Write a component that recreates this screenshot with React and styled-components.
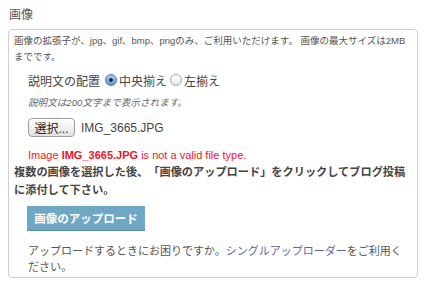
import React from 'react';
import styled, { createGlobalStyle } from 'styled-components';

const GlobalStyle = createGlobalStyle`
  html, body {
    margin: 0;
    padding: 0;
    background: #ffffff;
  }
  body {
    font-family: "Liberation Sans", "Noto Sans CJK JP", sans-serif;
    color: #444;
    text-spacing-trim: space-all;
  }
`;

const Page = styled.div`
  padding: 7px 12px 0 8px;
  width: 410px;
`;

const Title = styled.h3`
  margin: 0 0 6px 1px;
  font-size: 12px;
  line-height: 16px;
  font-weight: normal;
  color: #555;
`;

const Panel = styled.div`
  border: 1px solid #cfcfcf;
  border-radius: 4px;
  padding: 3px 4px 2px 5px;
  background: #fff;
`;

const Notice = styled.p`
  margin: 0;
  font-size: 9.5px;
  line-height: 16px;
  color: #555;
`;

const Indent = styled.div`
  padding-left: 14px;
  margin-top: ${(p) => p.$top || 0}px;
`;

const OptionRow = styled(Indent)`
  display: flex;
  align-items: center;
  height: 18px;
  font-size: 12px;
  color: #444;
`;

const OptionLabel = styled.span`
  margin-right: 5px;
`;

const Choice = styled.label`
  display: flex;
  align-items: center;
  margin-right: 3px;
`;

const Radio = styled.input.attrs({ type: 'radio' })`
  appearance: none;
  width: 12px;
  height: 12px;
  margin: 0 2px 0 0;
  border-radius: 50%;
  border: 1px solid #a5a5a5;
  background: linear-gradient(#ffffff, #e6e6e6);
  box-sizing: border-box;
  &:checked {
    border-color: #5477a3;
    background: radial-gradient(circle at 50% 50%, #1d2633 0, #1d2633 1.5px, transparent 2.1px),
      linear-gradient(#a8cdf2, #5d98da);
  }
`;

const Hint = styled(Indent)`
  font-size: 9.6px;
  line-height: 14px;
  font-style: italic;
  color: #666;
`;

const FileRow = styled(Indent)`
  display: flex;
  align-items: center;
  height: 19px;
  font-size: 12px;
  color: #444;
`;

const PickButton = styled.button`
  height: 19px;
  width: 47px;
  padding: 0;
  margin-right: 6px;
  border: 1px solid #9d9d9d;
  border-radius: 4px;
  background: linear-gradient(#ffffff, #e2e2e2);
  font-family: inherit;
  font-size: 12px;
  color: #222;
`;

const ErrorLine = styled(Indent)`
  font-size: 11px;
  line-height: 16px;
  color: #f0141e;
  b {
    font-weight: bold;
  }
`;

const Lead = styled.p`
  margin: 0;
  font-size: 11.2px;
  line-height: 18px;
  font-weight: bold;
  color: #444;
`;

const UploadButton = styled.button`
  display: block;
  margin: 7px 0 0 13px;
  width: 118px;
  height: 25px;
  border: none;
  border-bottom: 1px solid #5b8ea9;
  background: #6fa7c4;
  color: #fff;
  font-family: inherit;
  font-size: 11.5px;
  font-weight: bold;
  padding: 0;
`;

const Help = styled(Indent)`
  padding-right: 10px;
  font-size: 11px;
  line-height: 16px;
  color: #555;
`;

const HelpLink = styled.a`
  color: #5e62a6;
  text-decoration: none;
`;

export default function App() {
  return (
    <>
      <GlobalStyle />
      <Page>
        <Title>画像</Title>
        <Panel>
          <Notice>
            画像の拡張子が、jpg、gif、bmp、pngのみ、ご利用いただけます。 画像の最大サイズは2MB
            <br />
            までです。
          </Notice>
          <OptionRow $top={6}>
            <OptionLabel>説明文の配置</OptionLabel>
            <Choice>
              <Radio name="align" defaultChecked />
              中央揃え
            </Choice>
            <Choice>
              <Radio name="align" />
              左揃え
            </Choice>
          </OptionRow>
          <Hint $top={7}>説明文は200文字まで表示されます。</Hint>
          <FileRow $top={8}>
            <PickButton>選択...</PickButton>
            IMG_3665.JPG
          </FileRow>
          <ErrorLine $top={10}>
            Image <b>IMG_3665.JPG</b> is not a valid file type.
          </ErrorLine>
          <Lead>
            複数の画像を選択した後、「画像のアップロード」をクリックしてブログ投稿に添付して下さい。
          </Lead>
          <UploadButton>画像のアップロード</UploadButton>
          <Help $top={12}>
            アップロードするときにお困りですか。
            <HelpLink href="#">シングルアップローダー</HelpLink>
            をご利用ください。
          </Help>
        </Panel>
      </Page>
    </>
  );
}
